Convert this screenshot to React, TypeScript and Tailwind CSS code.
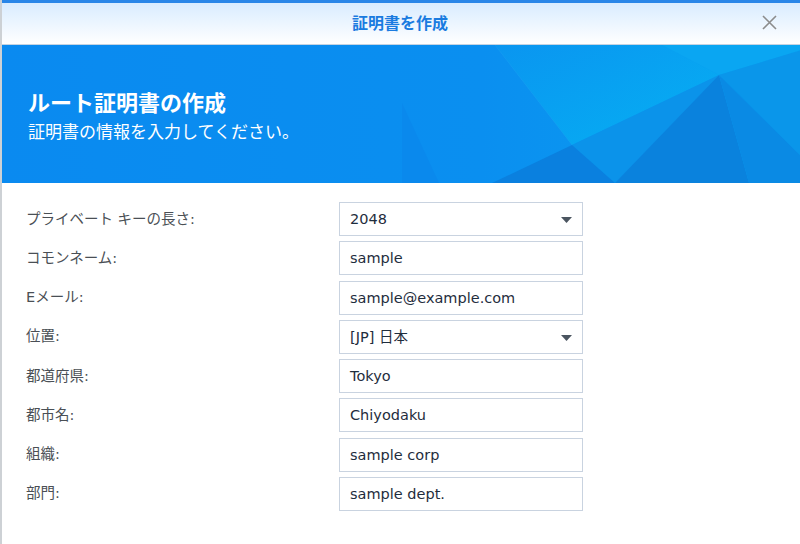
import React from "react";

const font = { fontFamily: '"DejaVu Sans", "Noto Sans CJK JP", sans-serif' };

function Banner() {
  return (
    <div className="relative h-[138px] bg-[#0a8cf0] overflow-hidden">
      <svg className="absolute inset-0" width="800" height="138" viewBox="0 0 800 138" preserveAspectRatio="none">
        <defs>
          <linearGradient id="bg" x1="0" y1="0" x2="1" y2="0">
            <stop offset="0" stopColor="#0a8af0" />
            <stop offset="0.6" stopColor="#0a8ff0" />
            <stop offset="1" stopColor="#0ba0f0" />
          </linearGradient>
          <linearGradient id="cy" x1="0" y1="0" x2="1" y2="1">
            <stop offset="0" stopColor="#0a96f0" />
            <stop offset="1" stopColor="#05b2f3" />
          </linearGradient>
        </defs>
        <rect width="800" height="138" fill="url(#bg)" />
        <polygon points="493,0 660,0 717,30 570,100" fill="url(#cy)" opacity="0.9" />
        <polygon points="660,0 800,0 800,5 717,30" fill="#0aa6f2" />
        <polygon points="570,100 717,30 613,138" fill="#0b93ea" />
        <polygon points="490,138 570,100 613,138" fill="#0a80df" />
        <polygon points="613,138 717,30 747,138" fill="#0a82dd" />
        <polygon points="717,30 800,5 800,112" fill="#0a96ea" />
        <polygon points="717,30 800,112 800,138 747,138" fill="#0a8ae4" />
        <polygon points="400,58 437,138 400,138" fill="#0a89ed" />
        <line x1="493" y1="0" x2="570" y2="100" stroke="#2aa8f5" strokeWidth="0.6" opacity="0.4" />
      </svg>
      <div className="relative pl-[26px] pt-[45px] text-white" style={font}>
        <div className="text-[22px] font-bold leading-[28px]">ルート証明書の作成</div>
        <div className="text-[17px] leading-[22px] mt-[3px]">証明書の情報を入力してください。</div>
      </div>
    </div>
  );
}

function Field({ label, value, select }: { label: string; value: string; select?: boolean }) {
  return (
    <div className="flex items-center">
      <div className="w-[313px] text-[14.5px] text-[#4a4f55] pt-[1px]">{label}</div>
      <div className="relative w-[244px] h-[34px] border border-[#c9d3e0] bg-white flex items-center pl-[10px] pt-[2px] text-[14.5px] text-[#1f2d3d]">
        {value}
        {select && (
          <svg className="absolute right-[10px] top-[14px]" width="11" height="6" viewBox="0 0 11 6">
            <polygon points="0,0 11,0 5.5,6" fill="#4b5560" />
          </svg>
        )}
      </div>
    </div>
  );
}

export default function App() {
  const rows: { label: string; value: string; select?: boolean }[] = [
    { label: "プライベート キーの長さ:", value: "2048", select: true },
    { label: "コモンネーム:", value: "sample" },
    { label: "Eメール:", value: "sample@example.com" },
    { label: "位置:", value: "[JP] 日本", select: true },
    { label: "都道府県:", value: "Tokyo" },
    { label: "都市名:", value: "Chiyodaku" },
    { label: "組織:", value: "sample corp" },
    { label: "部門:", value: "sample dept." },
  ];
  return (
    <div className="w-[800px] h-[544px] bg-white border-l-2 border-[#cdd1d5] flex flex-col overflow-hidden" style={font}>
      <div className="h-[45px] border-t-[3px] border-[#2a86e8] border-b border-b-[#c4d3e2] bg-gradient-to-b from-[#d9ecff] to-[#ffffff] relative flex items-center justify-center">
        <span className="text-[16px] font-bold text-[#1a7be0] -ml-[2px]">証明書を作成</span>
        <svg className="absolute right-[23px] top-[12px]" width="15" height="15" viewBox="0 0 15 15">
          <path d="M1 1 L14 14 M14 1 L1 14" stroke="#8c8c8c" strokeWidth="1.6" />
        </svg>
      </div>
      <Banner />
      <div className="flex flex-col gap-[5.25px] pl-[24px] pt-[19px]">
        {rows.map((r) => (
          <Field key={r.label} {...r} />
        ))}
      </div>
    </div>
  );
}
